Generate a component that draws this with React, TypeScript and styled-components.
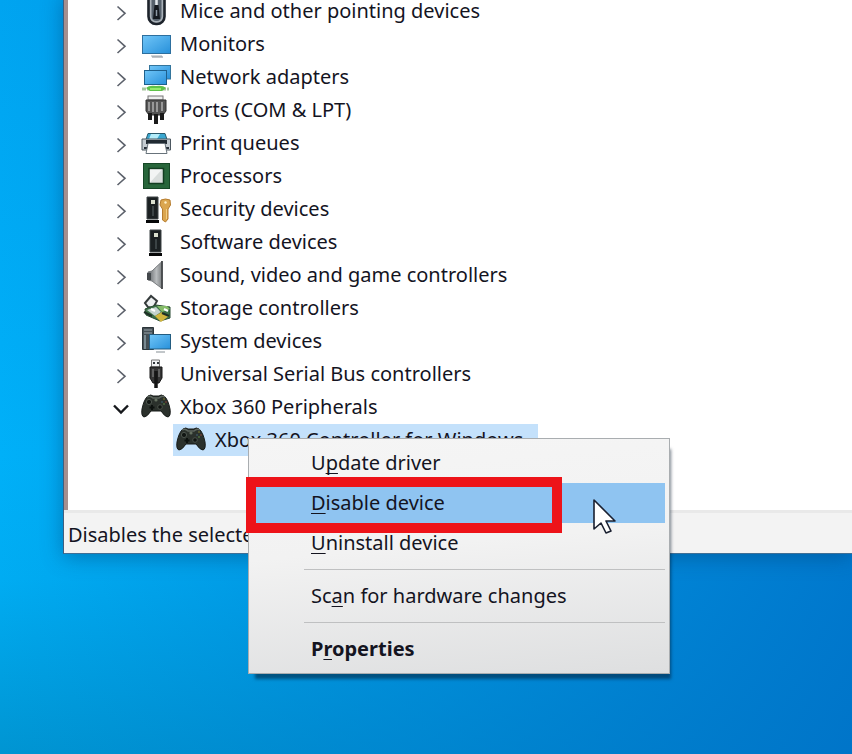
import React from "react";
import styled, { createGlobalStyle, css } from "styled-components";

const GlobalStyle = createGlobalStyle`
  *, *::before, *::after { box-sizing: border-box; }
  html, body { margin: 0; height: 100%; overflow: hidden; }
  body {
    font-family: "Noto Sans", "Open Sans", sans-serif;
    font-size: 20px;
    color: #14141f;
  }
  #root { height: 100%; }
`;

const Desktop = styled.main`
  position: relative;
  min-height: 100vh;
  padding-left: 63px;
  overflow: hidden;
  background:
    linear-gradient(90deg, rgba(0, 124, 208, 0) 0%, rgba(0, 124, 208, 0.55) 50%, rgba(0, 112, 200, 0.85) 100%),
    linear-gradient(178deg, #00a4f0 0%, #00b0f8 58%, #00acf2 74%, #0092ce 99%);
`;

const Window = styled.section`
  border-left: 1px solid #3f5f80;
  border-bottom: 1px solid #3f6f96;
  background: #f2f2f2;
  box-shadow: 0 3px 20px rgba(0, 60, 110, 0.45);
`;

const TreePane = styled.div`
  border-left: 4px solid #a58f8e;
  background: #ffffff;
  padding-bottom: 54px;
`;

const Tree = styled.ul`
  list-style: none;
  margin: -6px 0 0;
  padding: 0 0 0 40px;
`;

const Row = styled.li`
  display: flex;
  align-items: center;
  height: 33px;
`;

const Toggle = styled.button`
  display: grid;
  place-items: center;
  width: 26px;
  height: 30px;
  margin-right: 7px;
  padding: 4px 0 0;
  border: 0;
  background: none;
`;

const ItemLabel = styled.span`
  margin-left: 9px;
  line-height: 32px;
  white-space: nowrap;
`;

const SelectedItem = styled.div`
  display: flex;
  align-items: center;
  height: 32px;
  margin-left: 65px;
  padding: 0 15px 0 3px;
  background: #c4e1fb;
`;

const StatusBar = styled.footer`
  height: 43px;
  padding: 5px 4px 0;
  border-top: 3px solid #e9e9e9;
  background: #f3f3f3;
  line-height: 34px;
  white-space: nowrap;
`;

const Menu = styled.div`
  position: absolute;
  left: 248px;
  top: 438px;
  width: 422px;
  padding: 4px;
  border: 1px solid #a9adb0;
  background: linear-gradient(175deg, #f5f5f5 0%, #f2f2f2 45%, #dedfe0 100%);
  box-shadow: 4px 8px 3px -3px rgba(0, 20, 40, 0.5);
`;

const MenuItem = styled.button<{ $active?: boolean; $strong?: boolean }>`
  display: block;
  width: 100%;
  height: 40px;
  padding: 0 0 0 58px;
  border: 0;
  background: none;
  color: inherit;
  font: inherit;
  line-height: 38px;
  text-align: left;
  ${(p) => p.$active && css`background: #8fc4f1;`}
  ${(p) => p.$strong && css`font-weight: 700;`}
`;

const Mnemonic = styled.span`
  text-decoration: underline;
  text-decoration-thickness: 1px;
  text-underline-offset: 3px;
  text-decoration-skip-ink: none;
`;

const Separator = styled.hr`
  height: 1px;
  margin: 6px 0 6px 51px;
  border: 0;
  background: #bfc0c1;
`;

const Highlight = styled.div`
  position: absolute;
  left: 246px;
  top: 477px;
  width: 316px;
  height: 56px;
  border: 10px solid #ed1319;
  pointer-events: none;
`;

const Pointer = styled.svg`
  position: absolute;
  left: 592px;
  top: 498px;
  width: 26px;
  height: 38px;
`;

const Glyph = styled.svg`
  display: block;
  flex: none;
  width: 30px;
  height: 30px;
`;

const Chevron = ({ open }: { open?: boolean }) => (
  <svg width="16" height="18" viewBox="0 0 16 18" fill="none" aria-hidden="true">
    {open ? (
      <path d="M1 5.5 8 12.5 15 5.5" stroke="#16181c" strokeWidth="2.4" />
    ) : (
      <path d="M4.5 2.5 12 9.3 4.5 16" stroke="#5c616b" strokeWidth="1.6" />
    )}
  </svg>
);

const MouseIcon = () => (
  <Glyph viewBox="0 0 30 30" aria-hidden="true">
    <rect x="7.5" y="-4" width="16" height="32" rx="7.5" fill="#a9b1b8" stroke="#1d232b" strokeWidth="2.6" />
    <rect x="10.5" y="-2" width="10" height="27" rx="4.5" fill="#56616c" />
    <path d="M15.5 2v8" stroke="#e4eaee" strokeWidth="2.5" />
    <path d="M12 23 13.5 9h4l1.5 14z" fill="#14191f" />
    <path d="M15.5 14v6" stroke="#8e9aa5" strokeWidth="1.5" />
  </Glyph>
);

const ScreenFill = ({ id }: { id: string }) => (
  <defs>
    <linearGradient id={id} x1="0" y1="0" x2="1" y2="1">
      <stop offset="0" stopColor="#71c6f8" />
      <stop offset="1" stopColor="#2790da" />
    </linearGradient>
  </defs>
);

const MonitorIcon = () => (
  <Glyph viewBox="0 0 30 30" aria-hidden="true">
    <ScreenFill id="monitor" />
    <rect x="1.5" y="6.5" width="28" height="18" fill="url(#monitor)" stroke="#2d6f9e" />
    <path d="M10 27h11" stroke="#c2c8ce" strokeWidth="1.5" />
    <path d="M11 28h11" stroke="#838c95" />
  </Glyph>
);

const NetworkIcon = () => (
  <Glyph viewBox="0 0 30 30" aria-hidden="true">
    <ScreenFill id="network" />
    <rect x="8.5" y="3.5" width="21" height="13.5" fill="url(#network)" stroke="#34759c" />
    <rect x="3.5" y="8.5" width="22" height="14" fill="url(#network)" stroke="#1e608c" />
    <path d="M1 27h27" stroke="#a7c6a0" strokeWidth="3" strokeDasharray="4 1" />
    <path d="M5 26q3-3 10-2 7-1 10 2l-4 3H9z" fill="#5fc24a" />
    <path d="M9 27h11" stroke="#95ec6d" strokeWidth="2" />
  </Glyph>
);

const PortsIcon = () => (
  <Glyph viewBox="0 0 30 30" aria-hidden="true">
    <rect x="7" y="1" width="15" height="4" fill="#eceded" stroke="#777" />
    <path d="M5 5h20v11l-3 4H8l-3-4z" fill="#555" stroke="#303030" />
    <path d="M8 7v9M12 7v10M16 7v10M21 7v9" stroke="#989898" strokeWidth="2" />
    <path d="M9 18v7M15 19v10M21 18v7" stroke="#1b1b1b" strokeWidth="4" />
  </Glyph>
);

const PrinterIcon = () => (
  <Glyph viewBox="0 0 30 30" aria-hidden="true">
    <path d="M7 5.5h17l2 6H5z" fill="#3aa7d0" stroke="#28596c" />
    <path d="M10 6h9l-3 5H8z" fill="#b4edfa" />
    <path d="M1 11h28.5v11H1z" fill="#c4ccd2" stroke="#4d5861" />
    <path d="M5 12h21v4H5z" fill="#202a32" />
    <path d="M3 20h4M25 20h3" stroke="#273039" strokeWidth="2" />
    <path d="M7 15.5h17l2 10H5z" fill="#fff" stroke="#68737b" />
  </Glyph>
);

const ProcessorIcon = () => (
  <Glyph viewBox="0 0 30 30" aria-hidden="true">
    <rect x="2.5" y="2.5" width="26" height="25" fill="#28663b" stroke="#164726" />
    <rect x="8" y="7.5" width="14.5" height="15" fill="#d9dddc" stroke="#133e21" strokeWidth="1.5" />
    <path d="M9 8.5h12L9 21.5z" fill="#f3f4f4" />
  </Glyph>
);

const TowerShape = () => (
  <>
    <path d="M1 1h11v22H1z" fill="#1b2022" stroke="#3e4446" />
    <rect x="5" y="4" width="4" height="4" fill="#dbe0cf" />
    <path d="M7 10v10" stroke="#5d6668" />
    <path d="M0 24h13v3H0z" fill="#060708" />
  </>
);

const SecurityIcon = () => (
  <Glyph viewBox="0 0 30 30" aria-hidden="true">
    <g transform="translate(5 2)"><TowerShape /></g>
    <path d="M20 6q4.5-2 9 0l.5 5-2.5 4v10l-2.5 3-3-2V15L19 11z" fill="#dba64f" stroke="#b67c2e" />
    <circle cx="24.5" cy="8.5" r="1.2" fill="#fff1ca" />
    <path d="M25.5 15v10" stroke="#f2ce83" />
  </Glyph>
);

const SoftwareIcon = () => (
  <Glyph viewBox="0 0 30 30" aria-hidden="true">
    <g transform="translate(8 2)"><TowerShape /></g>
  </Glyph>
);

const SoundIcon = () => (
  <Glyph viewBox="0 0 30 30" aria-hidden="true">
    <defs>
      <linearGradient id="cone">
        <stop stopColor="#5f6366" />
        <stop offset=".6" stopColor="#b9bcbe" />
        <stop offset="1" stopColor="#7c8082" />
      </linearGradient>
    </defs>
    <path d="M7 12 11 11 21 1.5v27L11 21l-4-1z" fill="url(#cone)" stroke="#777b7e" />
    <path d="M21 1v28" fill="none" stroke="#46494b" strokeWidth="1.8" />
    <path d="M6 13h4v7H6z" fill="#43484b" />
  </Glyph>
);

const StorageIcon = () => (
  <Glyph viewBox="0 0 30 30" aria-hidden="true">
    <path d="m4 10 6-7 6 5-4 7-5-1z" fill="#edf0f1" stroke="#353b3c" strokeWidth="2" />
    <path d="m4 16 11-4 14 2v11l-10 3-14-6z" fill="#3d7248" stroke="#294b32" />
    <path d="m6 17 9-3 5 5-6 4z" fill="#c4d2ce" />
    <path d="m16 13 10 0 3 3-8 3z" fill="#85bc68" />
    <path d="m14 23 7-4 7 4-8 6z" fill="#d1b53d" />
    <path d="m3 19 8 4M21 20l7 3" stroke="#1e3026" strokeWidth="2" />
    <path d="m10 16 4 2M23 16l4 2" stroke="#fff" strokeWidth="2" />
  </Glyph>
);

const SystemIcon = () => (
  <Glyph viewBox="0 0 30 30" aria-hidden="true">
    <ScreenFill id="system" />
    <path d="M1.5 1.5h11v22h-11z" fill="#444e54" stroke="#2b3439" />
    <path d="M3 4h8M3 7h8" stroke="#98a4aa" />
    <path d="M4 9v14" stroke="#788991" strokeWidth="2" />
    <rect x="8.5" y="8.5" width="21" height="14.5" fill="url(#system)" stroke="#235c80" />
    <path d="M15 26h9" stroke="#858e94" />
  </Glyph>
);

const UsbIcon = () => (
  <Glyph viewBox="0 0 30 30" aria-hidden="true">
    <path d="M10.5 1h8v7h-8z" fill="#f0f1f2" stroke="#777" />
    <path d="M12 3h2v2h-2zM16 3h2v2h-2z" fill="#33383d" />
    <path d="M9 8h12v11l-3 5h-6l-3-5z" fill="#353535" stroke="#171717" />
    <path d="M12 10v8M18 10v8" stroke="#8b8b8b" />
    <path d="M15 12v17" stroke="#151515" strokeWidth="3.5" />
  </Glyph>
);

const ControllerIcon = () => (
  <Glyph viewBox="0 0 30 30" aria-hidden="true">
    <path d="M7 4q3-2 5 0h6q2-2 5 0 4 3 6 13 1 7-2 8-3 0-7-6H10q-4 6-7 6-3-1-2-8Q3 7 7 4Z" fill="#2b312c" stroke="#171b19" />
    <path d="M6 5q3-2 6 1h6q3-3 6-1" fill="none" stroke="#5d655e" strokeWidth="1.5" />
    <circle cx="8" cy="10" r="2.6" fill="#111613" stroke="#4c544d" />
    <circle cx="19" cy="15" r="2.3" fill="#101411" stroke="#4a514a" />
    <path d="M11 13v5M8.5 15.5h5" stroke="#0c110e" strokeWidth="2" />
    <circle cx="15" cy="8" r="1.6" fill="#657061" />
    <circle cx="23" cy="7" r="1.1" fill="#62622f" />
    <circle cx="25" cy="10" r="1.1" fill="#643d34" />
    <circle cx="21" cy="10" r="1.1" fill="#38505b" />
    <circle cx="23" cy="12" r="1.1" fill="#4a6a3e" />
  </Glyph>
);

const categories = [
  { name: "Mice and other pointing devices", Icon: MouseIcon },
  { name: "Monitors", Icon: MonitorIcon },
  { name: "Network adapters", Icon: NetworkIcon },
  { name: "Ports (COM & LPT)", Icon: PortsIcon },
  { name: "Print queues", Icon: PrinterIcon },
  { name: "Processors", Icon: ProcessorIcon },
  { name: "Security devices", Icon: SecurityIcon },
  { name: "Software devices", Icon: SoftwareIcon },
  { name: "Sound, video and game controllers", Icon: SoundIcon },
  { name: "Storage controllers", Icon: StorageIcon },
  { name: "System devices", Icon: SystemIcon },
  { name: "Universal Serial Bus controllers", Icon: UsbIcon },
  { name: "Xbox 360 Peripherals", Icon: ControllerIcon, open: true },
];

export default function App() {
  return (
    <>
      <GlobalStyle />
      <Desktop>
        <Window>
          <TreePane>
            <Tree role="tree">
              {categories.map(({ name, Icon, open }) => (
                <Row key={name} role="treeitem" aria-expanded={!!open}>
                  <Toggle type="button" aria-label={name}><Chevron open={open} /></Toggle>
                  <Icon />
                  <ItemLabel>{name}</ItemLabel>
                </Row>
              ))}
              <Row role="treeitem" aria-selected="true">
                <SelectedItem>
                  <ControllerIcon />
                  <ItemLabel>Xbox 360 Controller for Windows</ItemLabel>
                </SelectedItem>
              </Row>
            </Tree>
          </TreePane>
          <StatusBar>Disables the selected device.</StatusBar>
        </Window>
        <Menu role="menu">
          <MenuItem type="button" role="menuitem">U<Mnemonic>p</Mnemonic>date driver</MenuItem>
          <MenuItem type="button" role="menuitem" $active><Mnemonic>D</Mnemonic>isable device</MenuItem>
          <MenuItem type="button" role="menuitem"><Mnemonic>U</Mnemonic>ninstall device</MenuItem>
          <Separator />
          <MenuItem type="button" role="menuitem">Sc<Mnemonic>a</Mnemonic>n for hardware changes</MenuItem>
          <Separator />
          <MenuItem type="button" role="menuitem" $strong>P<Mnemonic>r</Mnemonic>operties</MenuItem>
        </Menu>
        <Highlight />
        <Pointer viewBox="0 0 26 38" aria-hidden="true">
          <path d="M2 2v29l7-6 5 10 5-2-5-10h9z" fill="#fff" stroke="#1a2030" strokeWidth="1.6" strokeLinejoin="round" />
        </Pointer>
      </Desktop>
    </>
  );
}
